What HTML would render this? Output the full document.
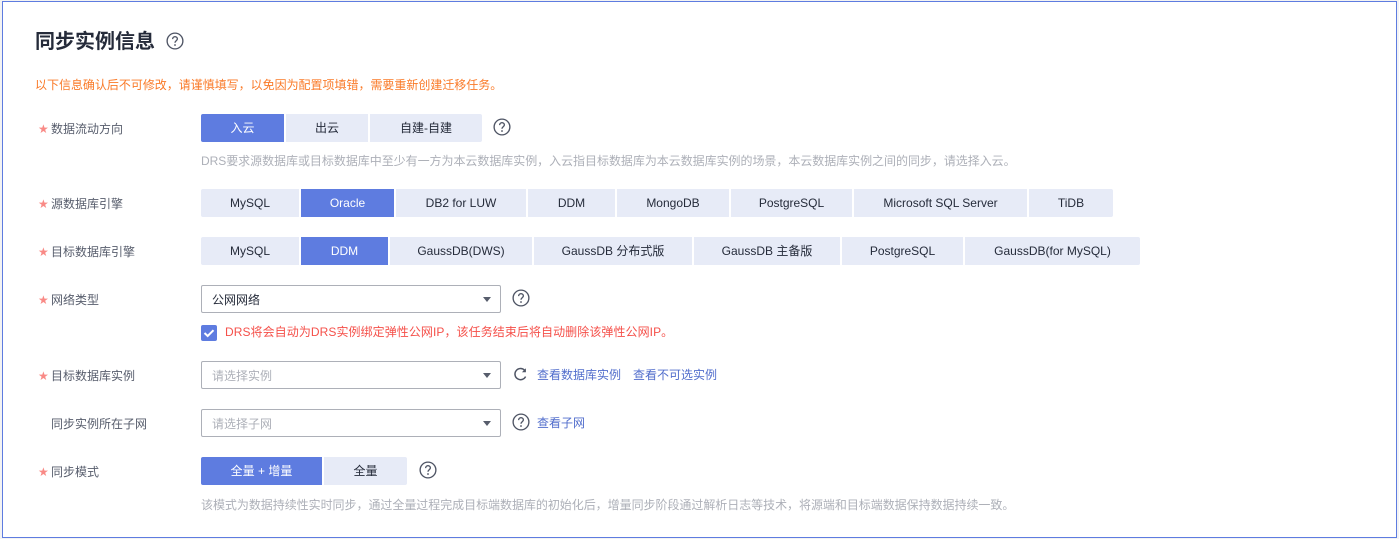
<!DOCTYPE html>
<html lang="zh">
<head>
<meta charset="utf-8">
<style>
html,body{margin:0;padding:0;background:#f3f3f3;}
body{width:1399px;height:539px;position:relative;overflow:hidden;font-family:"Liberation Sans","Noto Sans CJK SC",sans-serif;font-size:12px;color:#252b3a;}
#card{position:absolute;left:2px;top:1px;width:1393px;height:535px;background:#fff;border:1px solid #5e7ce0;}
.a{position:absolute;white-space:nowrap;line-height:18px;}
.t{left:35px;top:28px;font-size:20px;font-weight:bold;line-height:28px;color:#252b3a;}
.warn{left:35px;top:76px;color:#fa7a28;letter-spacing:-.02px;}
.lab{left:51px;color:#575d6c;}
.star{left:38px;color:#f98a86;font-size:12px;font-family:"DejaVu Sans",sans-serif;}
.b{position:absolute;height:28px;line-height:28px;text-align:center;background:#e7ebf7;color:#252b3a;white-space:nowrap;}
.on{background:#5e7ce0;color:#fff;}
.l{border-radius:2px 0 0 2px;}
.r{border-radius:0 2px 2px 0;}
.hint{left:201px;color:#adb0b8;letter-spacing:-.04px;}
.sel{position:absolute;left:201px;width:298px;height:26px;border:1px solid #adb0b8;border-radius:2px;line-height:26px;background:#fff;}
.sel span{position:absolute;left:10px;top:1px;}
.sel i{position:absolute;left:281px;top:11px;width:0;height:0;border-left:4px solid transparent;border-right:4px solid transparent;border-top:5px solid #575d6c;}
.ph{color:#adb0b8;}
.lnk{color:#526ecc;}
svg{position:absolute;}
</style>
</head>
<body>
<div id="card"></div>

<div class="a t">同步实例信息</div>
<svg style="left:166px;top:32px" width="18" height="18" viewBox="0 0 16 16" fill="none"><circle cx="8" cy="8" r="7" stroke="#4e5464" stroke-width="1.2"/><path d="M5.9 6.3C5.9 5 6.9 4.2 8 4.2c1.2 0 2.1.8 2.1 1.9 0 1.7-2.1 1.7-2.1 3.5" stroke="#4e5464" stroke-width="1.2"/><circle cx="8" cy="11.6" r=".8" fill="#4e5464"/></svg>
<div class="a warn">以下信息确认后不可修改，请谨慎填写，以免因为配置项填错，需要重新创建迁移任务。</div>

<div class="a star" style="top:120px">★</div>
<div class="a lab" style="top:120px">数据流动方向</div>
<div class="b on l" style="left:201px;top:114px;width:83px">入云</div>
<div class="b" style="left:286px;top:114px;width:82px">出云</div>
<div class="b r" style="left:370px;top:114px;width:112px">自建-自建</div>
<svg style="left:493px;top:118px" width="18" height="18" viewBox="0 0 16 16" fill="none"><circle cx="8" cy="8" r="7" stroke="#4e5464" stroke-width="1.2"/><path d="M5.9 6.3C5.9 5 6.9 4.2 8 4.2c1.2 0 2.1.8 2.1 1.9 0 1.7-2.1 1.7-2.1 3.5" stroke="#4e5464" stroke-width="1.2"/><circle cx="8" cy="11.6" r=".8" fill="#4e5464"/></svg>
<div class="a hint" style="top:152px">DRS要求源数据库或目标数据库中至少有一方为本云数据库实例，入云指目标数据库为本云数据库实例的场景，本云数据库实例之间的同步，请选择入云。</div>

<div class="a star" style="top:195px">★</div>
<div class="a lab" style="top:195px">源数据库引擎</div>
<div class="b l" style="left:201px;top:189px;width:98px">MySQL</div>
<div class="b on" style="left:301px;top:189px;width:93px">Oracle</div>
<div class="b" style="left:396px;top:189px;width:130px">DB2 for LUW</div>
<div class="b" style="left:528px;top:189px;width:87px">DDM</div>
<div class="b" style="left:617px;top:189px;width:112px">MongoDB</div>
<div class="b" style="left:731px;top:189px;width:121px">PostgreSQL</div>
<div class="b" style="left:854px;top:189px;width:173px">Microsoft SQL Server</div>
<div class="b r" style="left:1029px;top:189px;width:84px">TiDB</div>

<div class="a star" style="top:243px">★</div>
<div class="a lab" style="top:243px">目标数据库引擎</div>
<div class="b l" style="left:201px;top:237px;width:98px">MySQL</div>
<div class="b on" style="left:301px;top:237px;width:87px">DDM</div>
<div class="b" style="left:390px;top:237px;width:142px">GaussDB(DWS)</div>
<div class="b" style="left:534px;top:237px;width:158px">GaussDB 分布式版</div>
<div class="b" style="left:694px;top:237px;width:146px">GaussDB 主备版</div>
<div class="b" style="left:842px;top:237px;width:121px">PostgreSQL</div>
<div class="b r" style="left:965px;top:237px;width:175px">GaussDB(for MySQL)</div>

<div class="a star" style="top:291px">★</div>
<div class="a lab" style="top:291px">网络类型</div>
<div class="sel" style="top:285px"><span>公网网络</span><i></i></div>
<svg style="left:512px;top:289px" width="18" height="18" viewBox="0 0 16 16" fill="none"><circle cx="8" cy="8" r="7" stroke="#4e5464" stroke-width="1.2"/><path d="M5.9 6.3C5.9 5 6.9 4.2 8 4.2c1.2 0 2.1.8 2.1 1.9 0 1.7-2.1 1.7-2.1 3.5" stroke="#4e5464" stroke-width="1.2"/><circle cx="8" cy="11.6" r=".8" fill="#4e5464"/></svg>

<svg style="left:201px;top:325px" width="16" height="16" viewBox="0 0 16 16"><rect width="16" height="16" rx="2" fill="#5e7ce0"/><path d="M3.5 8l3.2 3L12.5 5.2" fill="none" stroke="#fff" stroke-width="2"/></svg>
<div class="a" style="left:225px;top:323px;color:#f5504a;letter-spacing:.07px">DRS将会自动为DRS实例绑定弹性公网IP，该任务结束后将自动删除该弹性公网IP。</div>

<div class="a star" style="top:367px">★</div>
<div class="a lab" style="top:367px">目标数据库实例</div>
<div class="sel" style="top:361px"><span class="ph">请选择实例</span><i></i></div>
<svg style="left:513px;top:367px" width="15" height="15" viewBox="0 0 15 15" fill="none"><path d="M12.6 9.6A5.6 5.6 0 1 1 11.6 3.2" stroke="#4e5464" stroke-width="1.5"/><path d="M12.9 1.2v4h-4z" fill="#4e5464"/></svg>
<div class="a lnk" style="left:537px;top:366px">查看数据库实例</div>
<div class="a lnk" style="left:633px;top:366px">查看不可选实例</div>

<div class="a lab" style="top:415px">同步实例所在子网</div>
<div class="sel" style="top:409px"><span class="ph">请选择子网</span><i></i></div>
<svg style="left:512px;top:413px" width="18" height="18" viewBox="0 0 16 16" fill="none"><circle cx="8" cy="8" r="7" stroke="#4e5464" stroke-width="1.2"/><path d="M5.9 6.3C5.9 5 6.9 4.2 8 4.2c1.2 0 2.1.8 2.1 1.9 0 1.7-2.1 1.7-2.1 3.5" stroke="#4e5464" stroke-width="1.2"/><circle cx="8" cy="11.6" r=".8" fill="#4e5464"/></svg>
<div class="a lnk" style="left:537px;top:414px">查看子网</div>

<div class="a star" style="top:463px">★</div>
<div class="a lab" style="top:463px">同步模式</div>
<div class="b on l" style="left:201px;top:457px;width:121px">全量 + 增量</div>
<div class="b r" style="left:324px;top:457px;width:83px">全量</div>
<svg style="left:419px;top:461px" width="18" height="18" viewBox="0 0 16 16" fill="none"><circle cx="8" cy="8" r="7" stroke="#4e5464" stroke-width="1.2"/><path d="M5.9 6.3C5.9 5 6.9 4.2 8 4.2c1.2 0 2.1.8 2.1 1.9 0 1.7-2.1 1.7-2.1 3.5" stroke="#4e5464" stroke-width="1.2"/><circle cx="8" cy="11.6" r=".8" fill="#4e5464"/></svg>
<div class="a hint" style="top:496px">该模式为数据持续性实时同步，通过全量过程完成目标端数据库的初始化后，增量同步阶段通过解析日志等技术，将源端和目标端数据保持数据持续一致。</div>
</body>
</html>
